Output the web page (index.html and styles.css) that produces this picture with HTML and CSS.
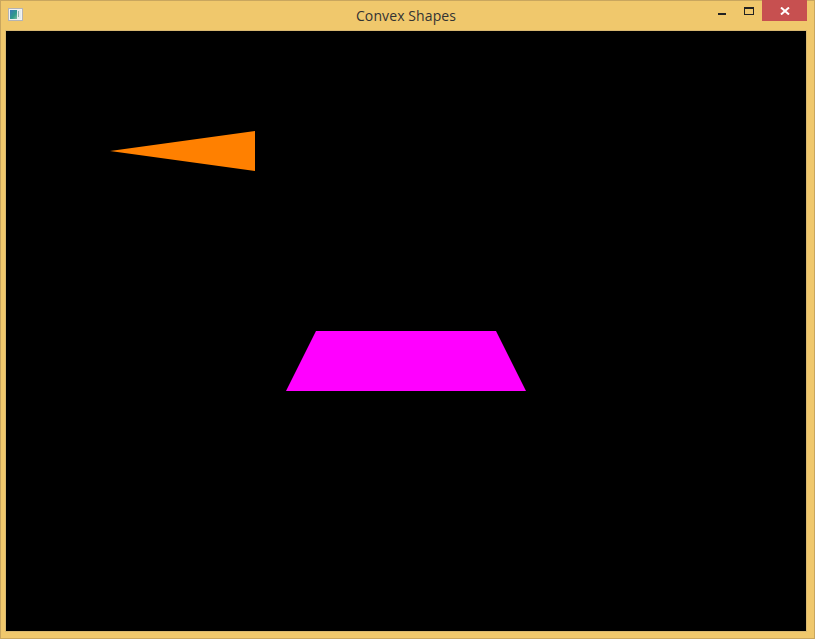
FILE: index.html
```html
<!DOCTYPE html>
<html>
<head>
<meta charset="utf-8">
<link rel="stylesheet" href="styles.css">
</head>
<body>
<div class="window">
  <div class="titlebar">
    <div class="tb-left">
      <svg class="app-icon" width="15" height="13" viewBox="0 0 15 13">
        <defs>
          <linearGradient id="g" x1="0" y1="0" x2="1" y2="1">
            <stop offset="0" stop-color="#3a78b8"/>
            <stop offset="0.6" stop-color="#2f9a8a"/>
            <stop offset="1" stop-color="#7cc0a0"/>
          </linearGradient>
        </defs>
        <rect x="0.5" y="0.5" width="14" height="12" fill="#f2f2f2" stroke="#b4b4b4"/>
        <rect x="2" y="2" width="7" height="9" fill="url(#g)"/>
        <rect x="9" y="2" width="4" height="9" fill="#e4ecee"/>
        <rect x="10" y="3" width="1" height="6" fill="#8fb0a8"/>
      </svg>
    </div>
    <div class="title">Convex Shapes</div>
    <div class="tb-right">
      <div class="btn btn-min"><span class="min-glyph"></span></div>
      <div class="btn btn-max"><span class="max-glyph"></span></div>
      <div class="btn btn-close">
        <svg width="10" height="8" viewBox="0 0 10 8">
          <path d="M1 0.5 L9 7.5 M9 0.5 L1 7.5" stroke="#fff" stroke-width="2"/>
        </svg>
      </div>
    </div>
  </div>
  <div class="client">
    <svg class="scene" width="800" height="600" viewBox="0 0 800 600">
      <polygon points="104,120 249,100 249,140" fill="#ff8000"/>
      <polygon points="310,300 490,300 520,360 280,360" fill="#ff00ff"/>
    </svg>
  </div>
</div>
</body>
</html>
```

FILE: styles.css
```css
html, body {
  margin: 0;
  padding: 0;
  background: #f0c86c;
}
.window {
  width: 815px;
  height: 639px;
  box-sizing: border-box;
  border: 1px solid #c9a65e;
  background: #f0c86c;
  display: flex;
  flex-direction: column;
}
.titlebar {
  height: 30px;
  display: grid;
  grid-template-columns: 1fr auto 1fr;
  align-items: start;
}
.tb-left {
  padding: 7px 0 0 7px;
}
.app-icon {
  display: block;
}
.title {
  font-family: "Open Sans", "Noto Sans", sans-serif;
  font-size: 14px;
  color: #333;
  padding-top: 5px;
  line-height: 20px;
  letter-spacing: 0.1px;
  padding-right: 3px;
}
.tb-right {
  display: flex;
  justify-content: flex-end;
  padding-right: 7px;
  margin-top: -1px;
}
.btn {
  height: 21px;
  display: flex;
  justify-content: center;
  align-items: center;
}
.btn-min {
  width: 26px;
}
.btn-max {
  width: 27px;
}
.btn-close {
  width: 45px;
  background: #c75050;
}
.min-glyph {
  display: block;
  width: 8px;
  height: 2px;
  background: #222;
  margin-top: 7px;
}
.max-glyph {
  display: block;
  width: 8px;
  height: 5px;
  border: 1px solid #222;
  border-top-width: 2px;
  margin-top: 1px;
}
.client {
  margin-left: 5px;
  width: 800px;
  height: 600px;
  background: #000;
  box-shadow: 0 0 0 1px #d8b870;
}
.scene {
  display: block;
}
```
